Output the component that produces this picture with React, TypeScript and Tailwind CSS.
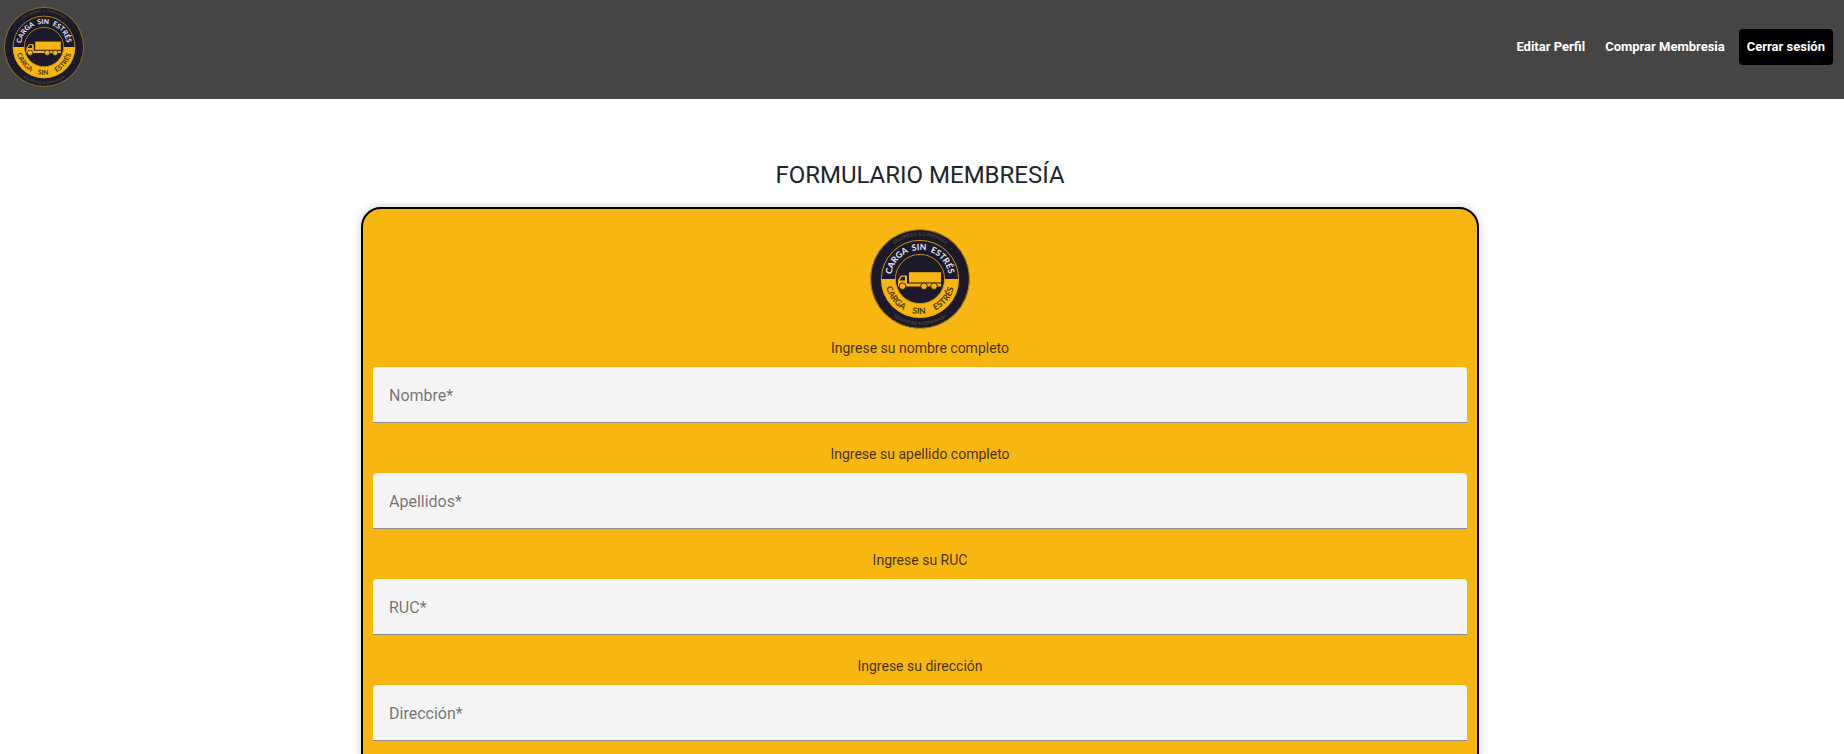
import { useId } from "react";

const words = [
  { text: "CARGA", offset: "21%" },
  { text: "SIN", offset: "49%" },
  { text: "ESTRÉS", offset: "78%" },
];

function Logo({ className }: { className: string }) {
  const id = useId();
  const top = `${id}-top`;
  const bottom = `${id}-bottom`;
  const outerTop = `${id}-outer-top`;
  const outerBottom = `${id}-outer-bottom`;
  return (
    <svg viewBox="0 0 100 100" className={className} role="img" aria-label="Carga sin estrés">
      <defs>
        <path id={top} d="M21 50A29 29 0 0 1 79 50" />
        <path id={bottom} d="M15 50A35 35 0 0 0 85 50" />
        <path id={outerTop} d="M6.5 50A43.5 43.5 0 0 1 93.5 50" />
        <path id={outerBottom} d="M4 50A46 46 0 0 0 96 50" />
      </defs>
      <circle cx="50" cy="50" r="49.6" fill="#1c1a2a" />
      <circle cx="50" cy="50" r="49.4" fill="none" stroke="#b98a16" strokeWidth="0.9" />
      <path d="M11 50A39 39 0 0 0 89 50Z" fill="#f7b50f" />
      <circle cx="50" cy="50" r="38.6" fill="none" stroke="#e2a414" strokeWidth="0.9" />
      <circle cx="50" cy="50" r="24.6" fill="#1c1a2a" stroke="#d69c16" strokeWidth="0.9" />
      <g fontFamily="Lato, sans-serif" fontSize="8.6" fontWeight="700" textAnchor="middle">
        <text fill="#e9e9f4">
          {words.map((word) => (
            <textPath key={word.text} href={`#${top}`} startOffset={word.offset}>
              {word.text}
            </textPath>
          ))}
        </text>
        <text fill="#4a3612">
          {words.map((word) => (
            <textPath key={word.text} href={`#${bottom}`} startOffset={word.offset}>
              {word.text}
            </textPath>
          ))}
        </text>
      </g>
      <g fontFamily="Lato, sans-serif" fontSize="4.4" fill="#66563a" textAnchor="middle">
        <text>
          <textPath href={`#${outerTop}`} startOffset="50%">SEGURIDAD &amp; CONFIANZA</textPath>
        </text>
        <text>
          <textPath href={`#${outerBottom}`} startOffset="50%">SEGURIDAD &amp; CONFIANZA</textPath>
        </text>
      </g>
      <path d="M39 43.2H71V53.5H39Z" fill="#f7b50f" />
      <path d="M31 46.5H37V57H28V51Z" fill="#f7b50f" />
      <path d="M31.8 47.8H35V51.4H29.6Z" fill="#1c1a2a" />
      <path d="M28 54.6H71V57.6H28Z" fill="#f7b50f" />
      <g fill="#f7b50f" stroke="#1c1a2a" strokeWidth="0.9">
        <circle cx="32.5" cy="57.2" r="3.3" />
        <circle cx="54" cy="57.2" r="3.3" />
        <circle cx="64" cy="57.2" r="3.3" />
      </g>
    </svg>
  );
}

const fields = [
  { id: "nombre", hint: "Ingrese su nombre completo", label: "Nombre*" },
  { id: "apellidos", hint: "Ingrese su apellido completo", label: "Apellidos*" },
  { id: "ruc", hint: "Ingrese su RUC", label: "RUC*" },
  { id: "direccion", hint: "Ingrese su dirección", label: "Dirección*" },
];

export default function App() {
  return (
    <div className="h-screen overflow-hidden bg-white font-[Roboto,sans-serif] text-[#212529]">
      <header className="flex items-center justify-between bg-[#454545] pt-[7px] pr-[11px] pb-3 pl-1">
        <a href="#inicio">
          <Logo className="block size-20" />
        </a>
        <nav className="flex items-center gap-3 text-[13px] leading-5 font-bold text-white">
          <a href="#perfil" className="pr-2">Editar Perfil</a>
          <a href="#membresia" className="pr-0.5">Comprar Membresia</a>
          <button type="button" className="rounded bg-black p-2">Cerrar sesión</button>
        </nav>
      </header>
      <main className="flex flex-col items-center pt-[60px] pr-1">
        <h1 className="text-2xl leading-8">FORMULARIO MEMBRESÍA</h1>
        <form className="mt-4 flex w-full max-w-[1118px] flex-col items-center rounded-[20px] border-2 border-black bg-[#f7b610] px-2.5 py-5 shadow-[0_0_10px_rgba(0,0,0,0.2)]">
          <Logo className="size-[100px]" />
          {fields.map((field) => (
            <div key={field.id} className="mb-3 flex w-full flex-col">
              <label htmlFor={field.id} className="py-2 text-center text-sm leading-[22px] text-black/75">
                {field.hint}
              </label>
              <input
                id={field.id}
                type="text"
                placeholder={field.label}
                className="h-14 rounded-t border-b border-[#8c8c8c] bg-[#f4f4f4] px-4 pt-0.5 text-base outline-none placeholder:text-black/55"
              />
            </div>
          ))}
        </form>
      </main>
    </div>
  );
}
